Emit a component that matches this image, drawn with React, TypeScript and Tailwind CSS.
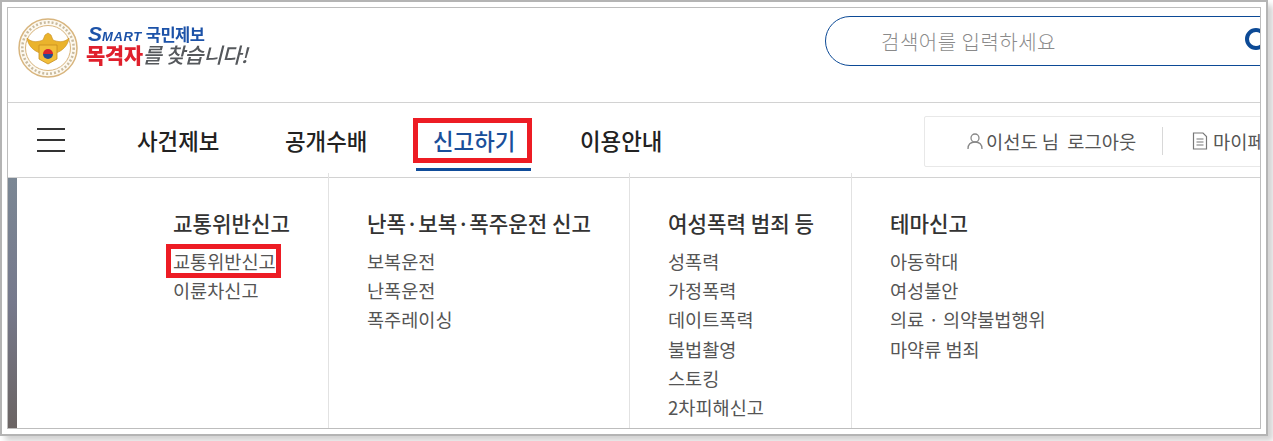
const columns = [
  { title: '교통위반신고', items: ['교통위반신고', '이륜차신고'], box: 'w-[312px] pl-[156px]' },
  { title: '난폭·보복·폭주운전 신고', items: ['보복운전', '난폭운전', '폭주레이싱'], box: 'w-[301px] pl-[38px]' },
  {
    title: '여성폭력 범죄 등',
    items: ['성폭력', '가정폭력', '데이트폭력', '불법촬영', '스토킹', '2차피해신고'],
    box: 'w-[222px] pl-[38px]',
  },
  { title: '테마신고', items: ['아동학대', '여성불안', '의료 · 의약불법행위', '마약류 범죄'], box: 'w-[300px] pl-[38px]' },
];

function Emblem() {
  return (
    <svg width="60" height="60" viewBox="0 0 60 60" className="shrink-0 blur-[0.4px]">
      <circle cx="30" cy="30" r="29" fill="#fdf9f0" stroke="#d8b57e" strokeWidth="1.5" />
      <circle cx="30" cy="30" r="25.7" fill="none" stroke="#c9bb9f" strokeWidth="2.5" strokeDasharray="2 2" />
      <circle cx="30" cy="30" r="22.5" fill="#fff" stroke="#d8b57e" strokeWidth="1" />
      <path d="M9 20 C14 25 20 24 25 22 L27 17 L30 15 L33 17 L35 22 C40 24 46 25 51 20 C50 28 44 33 38 35 L22 35 C16 33 10 28 9 20 Z" fill="#eab32c" stroke="#c78d1e" strokeWidth="0.6" />
      <path d="M21 27 L39 27 L39 41 L30 46 L21 41 Z" fill="#f2bf3a" stroke="#c78d1e" strokeWidth="0.8" />
      <path d="M25 36 A5 5 0 0 1 35 36 Z" fill="#d5232f" />
      <path d="M25 36 A5 5 0 0 0 35 36 Z" fill="#204a94" />
    </svg>
  );
}

function Logo() {
  return (
    <div className="flex h-[78px] items-center pt-[1px] pl-[10px]">
      <Emblem />
      <div className="-mt-[6px] ml-[8px] flex flex-col font-bold blur-[0.3px]">
        <div className="flex h-[19px] items-baseline leading-[19px] text-[#1c52a8]">
          <span className="ml-[2px] font-['Liberation_Sans',sans-serif] text-[21px] italic">S</span>
          <span className="font-['Liberation_Sans',sans-serif] text-[13px] tracking-[0.6px] italic">MART</span>
          <span className="ml-[4px] text-[16.5px] tracking-[-0.5px]">국민제보</span>
        </div>
        <div className="flex h-[22px] items-baseline leading-[22px] tracking-[-0.5px]">
          <span className="text-[21px] font-black text-[#e0202c]">목격자</span>
          <span className="text-[21px] font-medium text-[#55585c] italic">를 찾습니다!</span>
        </div>
      </div>
    </div>
  );
}

function Header() {
  return (
    <div className="flex h-[95px] border-b border-[#d2d2d2]">
      <div className="w-[817px] shrink-0">
        <Logo />
      </div>
      <div className="mt-[8px] flex h-[50px] w-[500px] shrink-0 items-center rounded-l-full border border-[#0c4a96] pl-[55px]">
        <span className="mt-[2px] whitespace-nowrap text-[20px] font-light tracking-[0.5px] text-[#8a8a8a]">검색어를 입력하세요</span>
        <span className="-mt-[4px] ml-[189px] size-[22px] shrink-0 rounded-full border-[4px] border-[#0c4a96]" />
      </div>
    </div>
  );
}

function Nav() {
  return (
    <div className="flex h-[75px] items-center border-b border-[#d2d2d2]">
      <div className="ml-[29px] flex w-[28px] shrink-0 flex-col gap-[9px]">
        <span className="h-[2px] bg-[#333]" />
        <span className="h-[2px] bg-[#333]" />
        <span className="h-[2px] bg-[#333]" />
      </div>
      <div className="ml-[72px] flex shrink-0 items-center text-[22.4px] leading-[30px] font-medium text-[#222]">
        <span className="w-[148px]">사건제보</span>
        <span className="w-[148px]">공개수배</span>
        <span className="relative w-[147px] text-[#1a4f9a]">
          신고하기
          <span className="absolute left-[-20px] top-[-7px] h-[45px] w-[119px] border-[5px] border-[#ed1c24]" />
          <span className="absolute left-[-17px] top-[43px] h-[3px] w-[115px] bg-[#0f4c9a]" />
        </span>
        <span className="w-[100px]">이용안내</span>
      </div>
      <div className="mt-[2px] ml-[244px] flex h-[51px] w-[400px] shrink-0 items-center rounded-[2px] border border-[#e8e8e8] pl-[41px] text-[18.7px] text-[#555]">
        <svg width="18" height="18" viewBox="0 0 18 18" fill="none" stroke="#888" strokeWidth="1.3" className="shrink-0">
          <circle cx="9" cy="6" r="4" />
          <path d="M2 17 C2 12 5 10 9 10 C13 10 16 12 16 17" />
        </svg>
        <span className="ml-[2px] whitespace-pre">이선도 님  로그아웃</span>
        <span className="ml-[26px] h-[28px] w-px shrink-0 bg-[#d8d8d8]" />
        <svg width="16" height="18" viewBox="0 0 16 18" fill="none" stroke="#777" strokeWidth="1.2" className="ml-[29px] shrink-0">
          <path d="M1.500 1 H11 L14.500 4.500 V17 H1.500 Z" />
          <path d="M4.500 7 H11.500 M4.500 10 H11.500 M4.500 13 H11.500" />
        </svg>
        <span className="ml-[5px] whitespace-nowrap">마이페이지</span>
      </div>
    </div>
  );
}

function Menu() {
  return (
    <div className="flex h-[250px]">
      <div className="w-[9px] shrink-0 bg-gradient-to-b from-[#7b8794] via-[#76798c] to-[#6b6463]" />
      {columns.map((col, i) => (
        <div key={col.title} className={`${col.box} relative shrink-0 pt-[30px]`}>
          {i < 3 && <span className="absolute top-[-5px] right-0 bottom-0 w-px bg-[#e2e2e2]" />}
          <h3 className="h-[30px] whitespace-nowrap text-[21.2px] leading-[30px] font-medium text-[#333]">{col.title}</h3>
          <ul className="mt-[8px]">
            {col.items.map((item, j) => (
              <li key={item} className="relative h-[29.2px] whitespace-nowrap text-[18.6px] leading-[30px] text-[#555]">
                {item}
                {i === 0 && j === 0 && (
                  <span className="absolute left-[-7px] top-[-2px] h-[34px] w-[115px] border-[5px] border-[#ed1c24]" />
                )}
              </li>
            ))}
          </ul>
        </div>
      ))}
    </div>
  );
}

export default function App() {
  return (
    <div className="h-[441px] w-[1273px] overflow-hidden bg-white font-['Noto_Sans_CJK_KR','Noto_Sans',sans-serif]">
      <div className="h-[436px] w-[1268px] border-2 border-[#b4b4b4] p-[5px] shadow-[5px_5px_6px_rgba(0,0,0,0.18)]">
        <div className="h-[422px] w-[1254px] overflow-hidden border border-[#bdbdbd] bg-white">
          <Header />
          <Nav />
          <Menu />
        </div>
      </div>
    </div>
  );
}
